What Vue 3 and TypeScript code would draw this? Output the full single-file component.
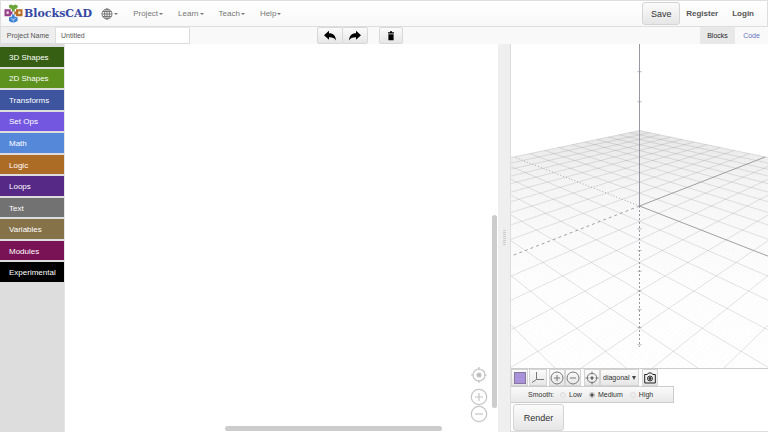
<script setup lang="ts">
import { ref } from 'vue'

interface Category { name: string; color: string }

const categories: Category[] = [
  { name: '3D Shapes', color: '#375f14' },
  { name: '2D Shapes', color: '#5c921d' },
  { name: 'Transforms', color: '#3d559f' },
  { name: 'Set Ops', color: '#7457e0' },
  { name: 'Math', color: '#5688da' },
  { name: 'Logic', color: '#ad6c26' },
  { name: 'Loops', color: '#552985' },
  { name: 'Text', color: '#727272' },
  { name: 'Variables', color: '#857249' },
  { name: 'Modules', color: '#7a1356' },
  { name: 'Experimental', color: '#000000' },
]
const menus: string[] = ['Project', 'Learn', 'Teach', 'Help']
const qualities: string[] = ['Low', 'Medium', 'High']
const quality = ref('Medium')
const projectName = ref('Untitled')
const view = ref('diagonal')

// Perspective projection of the build plate: x and y in cells, z in cells above it.
const originX = 639.5
const originY = 206
function project(x: number, y: number): string {
  const across = (x - y) / 2
  const depth = (x + y) / 2
  const w = 1 + 0.0855 * depth
  return `${(originX + (35.9 * across) / w).toFixed(2)} ${(originY - (14 * depth) / w).toFixed(2)}`
}
function heightAt(z: number): number {
  return originY - (23.4 * z) / (1 - 0.0257 * z)
}
function gridPath(step: number, major: boolean): string {
  let d = ''
  for (let n = -10 * step; n <= 10 * step; n++) {
    if (n === 0 || (!major && n % step === 0)) continue
    const v = n / step
    d += `M${project(v, -10)}L${project(v, 10)}M${project(-10, v)}L${project(10, v)}`
  }
  return d
}
const minorGrid = gridPath(10, false)
const majorGrid = gridPath(1, true)
const solidAxes = `M${project(0, 0)}L${project(10, 0)}M${project(0, 0)}L${project(0, -10)}`
const dashedFar = `M${project(0, 0)}L${project(0, 10)}`
const dashedNear = `M${project(0, 0)}L${project(-10, 0)}`
const plate = `M${project(10, 10)}L${project(10, -10)}L${project(-10, -10)}L${project(-10, 10)}Z`
const ticks = [5, 4, -1, -2, -3, -4, -5, -6, -7].map((z) => `M637.5 ${heightAt(z).toFixed(1)}h4`).join('')
</script>

<template>
  <div class="app">
    <header class="navbar">
      <a class="brand" href="#">
        <svg class="logo" viewBox="0 0 19 19" aria-hidden="true">
          <path d="M4.800 1.500l2.200-1 2 1 2.500-1 2.500 1.500-1 2.300-2.300.9v2.300H8V5.200L5.500 4z" fill="#69a33a" />
          <path d="M.5 5.200h6.300v2.300h1.700v3H6.800v1.800H.5z" fill="#963f86" />
          <path d="M2.500 7.300h2.300v2.700H2.500z" fill="#ecd3e6" />
          <path d="M12 5.200h6.500v7.100H12v-1.800h-1.700v-3H12z" fill="#b86f25" />
          <path d="M14.200 7.300h2.300v2.700h-2.300z" fill="#fbe7c8" />
          <path d="M8 10.500h2.600v2l3 1v3.500l-3.300 1.500H8L5 17v-3.500l3-1z" fill="#3f83d5" />
          <path d="M7 14.500l2.300 1 2.300-1M9.300 15.500v2" fill="none" stroke="#d5e7fc" stroke-width=".8" />
        </svg>
        <span>BlocksCAD</span>
      </a>
      <nav class="menus">
        <button class="menu globe" aria-label="Language">
          <svg viewBox="0 0 12 12" aria-hidden="true">
            <circle cx="6" cy="6" r="5" /><ellipse cx="6" cy="6" rx="2.400" ry="5" />
            <path d="M6 1v10M1 6h10M1.800 3.500h8.400M1.800 8.500h8.400" />
          </svg>
          <i class="caret"></i>
        </button>
        <button v-for="m in menus" :key="m" class="menu">{{ m }}<i class="caret"></i></button>
      </nav>
      <div class="account">
        <button class="raised save">Save</button>
        <a href="#">Register</a>
        <a href="#">Login</a>
      </div>
    </header>

    <div class="toolbar">
      <label class="name-label" for="project-name">Project Name</label>
      <input id="project-name" v-model="projectName" class="name-input" type="text" />
      <div class="edit-tools">
        <div class="pair">
          <button class="raised tool" aria-label="Undo">
            <svg viewBox="0 0 14 12" aria-hidden="true"><path d="M1 5.200L6 .8v2.500c4.300 0 6.600 2.500 7 7.200C11.500 8 9.500 7.200 6 7.300v2.500z" /></svg>
          </button>
          <button class="raised tool" aria-label="Redo">
            <svg viewBox="0 0 14 12" aria-hidden="true"><path d="M13 5.200L8 .8v2.500C3.700 3.300 1.400 5.800 1 10.500 2.500 8 4.500 7.200 8 7.300v2.500z" /></svg>
          </button>
        </div>
        <button class="raised tool trash" aria-label="Delete">
          <svg viewBox="0 0 14 12" aria-hidden="true"><path d="M4 2.200h2v-1h2v1h2v1.300H4zM4.400 4.200h5.200v6H4.400z" /></svg>
        </button>
      </div>
      <div class="tabs">
        <button class="tab active">Blocks</button>
        <button class="tab code">Code</button>
      </div>
    </div>

    <main class="workspace">
      <section class="editor">
        <div class="toolbox">
          <ul class="categories">
            <li v-for="c in categories" :key="c.name">
              <button class="category" :style="{ backgroundColor: c.color }">{{ c.name }}</button>
            </li>
          </ul>
        </div>
        <div class="blocks">
          <div class="zoomers">
            <button aria-label="Center blocks">
              <svg viewBox="0 0 18 18" aria-hidden="true"><circle cx="9" cy="9" r="6" /><circle cx="9" cy="9" r="2" class="dot" /><path d="M9 1v3M9 14v3M1 9h3M14 9h3" /></svg>
            </button>
            <button class="in" aria-label="Zoom in">
              <svg viewBox="0 0 18 18" aria-hidden="true"><circle cx="9" cy="9" r="7.700" /><path d="M5 9h8M9 5v8" /></svg>
            </button>
            <button aria-label="Zoom out">
              <svg viewBox="0 0 18 18" aria-hidden="true"><circle cx="9" cy="9" r="7.700" /><path d="M5 9h8" /></svg>
            </button>
          </div>
          <div class="scroll-v"></div>
          <div class="scroll-h"></div>
        </div>
      </section>
      <div class="splitter"><i></i></div>
      <section class="viewer">
        <svg class="scene" viewBox="511 44 257 324" preserveAspectRatio="xMidYMid slice" aria-hidden="true">
          <defs>
            <linearGradient id="haze" gradientUnits="userSpaceOnUse" x1="0" y1="130" x2="0" y2="290">
              <stop offset="0" stop-color="#f3f3f3" />
              <stop offset=".35" stop-color="#fafafa" />
              <stop offset="1" stop-color="#ffffff" />
            </linearGradient>
          </defs>
          <path :d="plate" fill="url(#haze)" />
          <path :d="minorGrid" class="minor" />
          <path :d="majorGrid" class="major" />
          <path :d="solidAxes" class="axis" />
          <path :d="dashedFar" class="axis far" />
          <path :d="dashedNear" class="axis near" />
          <path d="M639.500 44V206" class="z-axis" />
          <path d="M639.500 206V347" class="z-axis below" />
          <path :d="ticks" class="ticks" />
        </svg>
        <div class="view-tools">
          <button class="raised swatch" aria-label="Color"><i></i></button>
          <button class="raised icon axes" aria-label="Toggle axes">
            <svg viewBox="0 0 16 16" aria-hidden="true"><path d="M6.500 2v7.500H14M6.500 9.500L2 12.500" /></svg>
          </button>
          <button class="raised icon" aria-label="Zoom in">
            <svg viewBox="0 0 16 16" aria-hidden="true"><circle cx="8" cy="8" r="6" /><path d="M5 8h6M8 5v6" /></svg>
          </button>
          <button class="raised icon" aria-label="Zoom out">
            <svg viewBox="0 0 16 16" aria-hidden="true"><circle cx="8" cy="8" r="6" /><path d="M5 8h6" /></svg>
          </button>
          <button class="raised icon reset" aria-label="Reset view">
            <svg viewBox="0 0 16 16" aria-hidden="true"><circle cx="8" cy="8" r="4.700" /><circle cx="8" cy="8" r="1.200" class="dot" /><path d="M8 1.500v3M8 11.500v3M1.500 8h3M11.500 8h3" /></svg>
          </button>
          <div class="raised picker">
            <select v-model="view" aria-label="View direction">
              <option>diagonal</option>
              <option>front</option>
              <option>top</option>
            </select>
            <i></i>
          </div>
          <button class="raised icon camera" aria-label="Take picture">
            <svg viewBox="0 0 16 16" aria-hidden="true"><path d="M2.700 4.500h2.600L6.500 3h3l1.200 1.500h2.600v8.500H2.700z" /><circle cx="8" cy="8.500" r="2.500" /><circle cx="8" cy="8.500" r="1" class="dot" /></svg>
          </button>
        </div>
        <div class="quality" role="radiogroup" aria-labelledby="smooth-label">
          <span id="smooth-label" class="smooth">Smooth:</span>
          <label v-for="q in qualities" :key="q">
            <input v-model="quality" type="radio" name="quality" :value="q" />{{ q }}
          </label>
        </div>
        <div class="render-row"><button class="raised render">Render</button></div>
      </section>
    </main>
  </div>
</template>

<style>
body { margin: 0; background: #fff; }
</style>

<style scoped>
* { box-sizing: border-box; }
.app { display: flex; flex-direction: column; height: 100vh; overflow: hidden; font: 8px/12px "Liberation Sans", Arial, sans-serif; color: #333; }
button { margin: 0; padding: 0; border: 0; background: none; font: inherit; color: inherit; display: flex; align-items: center; justify-content: center; }
a { color: inherit; text-decoration: none; }
svg { display: block; flex: none; }
.raised { border: 1px solid #d4d4d4; background: linear-gradient(#fbfbfb, #e6e6e6); }

.navbar { display: flex; align-items: center; height: 27px; flex: none; border: 1px solid #dedede; background: linear-gradient(#fff, #f8f8f8); }
.brand { display: flex; align-items: center; gap: 1px; margin-left: 3px; color: #3648a4; font: bold 11px/16px "DejaVu Serif", serif; }
.logo { width: 19px; height: 19px; }
.menus { display: flex; align-items: center; gap: 15px; margin-left: 9px; color: #777; }
.menu { gap: 1px; }
.globe svg { width: 12px; height: 12px; fill: none; stroke: #777; stroke-width: 1; }
.caret { border: 2px solid transparent; border-top-color: #777; border-bottom: 0; }
.account { display: flex; align-items: center; gap: 14px; margin-left: auto; margin-right: 13px; font-weight: bold; color: #555; }
.save { width: 38px; height: 23px; margin-right: -8px; border-radius: 3px; font-size: 9px; font-weight: normal; color: #333; }

.toolbar { display: flex; height: 17px; flex: none; background: #f9f9f9; font-size: 7px; color: #555; }
.name-label { width: 56px; border: 1px solid #ddd; border-top: 0; background: #eee; text-align: center; line-height: 17px; }
.name-input { width: 134px; border: 1px solid #ddd; border-top-color: #e8e8e8; border-left: 0; padding: 0 5px; background: #fff; font: inherit; color: #555; outline: 0; }
.edit-tools { display: flex; gap: 11px; margin-left: 127px; }
.pair { display: flex; }
.tool { width: 26px; height: 17px; border-radius: 2px; border-color: #d8d8d8; }
.pair .tool + .tool { margin-left: -1px; }
.tool svg { width: 14px; height: 12px; fill: #000; }
.trash { width: 24px; }
.tabs { display: flex; margin-left: auto; }
.tab { width: 35px; color: #6672c4; }
.tab.code { width: 33px; }
.tab.active { background: #e8e8e8; color: #222; }

.workspace { display: grid; grid-template-columns: 498fr 12px 258fr; flex: 1; min-height: 0; }
.editor { display: flex; min-width: 0; }
.toolbox { width: 65px; flex: none; padding-top: 3px; background: #ddd; border-right: 1px solid #e6e6e6; }
.categories { display: flex; flex-direction: column; gap: 2px; height: 235px; margin: 0; padding: 0; list-style: none; }
.categories li { display: flex; flex: 1; min-height: 0; }
.category { flex: 1; justify-content: flex-start; padding: 2px 0 0 9px; color: #fff; }
.blocks { position: relative; flex: 1; }
.zoomers { position: absolute; right: 10px; bottom: 10px; display: flex; flex-direction: column; }
.zoomers .in { margin-top: 5px; }
.zoomers button { width: 18px; height: 18px; margin-bottom: -1px; }
.zoomers svg { width: 18px; height: 18px; fill: none; stroke: #c4c4c4; stroke-width: 1.2; }
.zoomers .dot { fill: #bbb; }
.scroll-v { position: absolute; right: 1px; top: 44%; bottom: 24px; width: 5px; border-radius: 3px; background: #ccc; }
.scroll-h { position: absolute; left: 37%; right: 56px; bottom: 1px; height: 5px; border-radius: 3px; background: #ccc; }
.splitter { display: flex; align-items: center; justify-content: center; background: #efefef; }
.splitter i { width: 3px; height: 16px; background: repeating-linear-gradient(#ccc 0 1px, #eee 1px 2px); }

.viewer { display: flex; flex-direction: column; min-width: 0; border-left: 1px solid #ddd; }
.scene { flex: 1; min-height: 0; width: 100%; fill: none; }
.minor { stroke: #777; stroke-opacity: .05; stroke-width: .5; }
.major { stroke: #777; stroke-opacity: .38; stroke-width: .6; }
.axis { stroke: #888; stroke-width: .8; }
.far { stroke-dasharray: 1 2; }
.near { stroke-dasharray: 3 3; }
.z-axis { stroke: #8c8c98; stroke-width: .9; }
.below { stroke-dasharray: 2 2; }
.ticks { stroke: #999; stroke-width: .7; }
.view-tools { display: flex; height: 18px; flex: none; border-top: 1px solid #ccc; }
.icon { width: 16px; }
.icon svg { width: 16px; height: 16px; fill: none; stroke: #777; stroke-width: 1; }
.icon .dot { fill: #444; }
.view-tools .swatch { width: 17px; }
.swatch i { width: 12px; height: 12px; border: 1px solid #88769f; background: #a892dc; }
.axes { width: 18px; margin: 0 2px 0 1px; }
.reset { margin-left: 3px; }
.picker { display: flex; align-items: center; width: 39px; }
.picker select { appearance: none; width: 31px; padding: 0 0 0 2px; border: 0; background: none; font: 7px/12px "Liberation Sans", Arial, sans-serif; color: #333; outline: 0; }
.picker i { border: 2px solid transparent; border-top: 4px solid #444; border-bottom: 0; }
.camera { margin-left: 3px; }
.camera svg { stroke: #222; }
.quality { display: flex; align-items: center; align-self: flex-start; width: 163px; height: 17px; flex: none; padding: 1px 0 0 17px; border: 1px solid #ccc; border-left: 0; background: linear-gradient(#fafafa, #e8e8e8); font-size: 7px; }
.smooth { margin-right: 6px; }
.quality label { display: flex; align-items: center; gap: 3px; margin-right: 7px; }
.quality input { appearance: none; width: 6px; height: 6px; margin: 0; border: 1px solid #ddd; border-radius: 50%; background: #eee; }
.quality input:checked { border-color: #bbb; background: radial-gradient(#444 0 1px, #ddd 2px); }
.render-row { display: flex; height: 29px; flex: none; padding: 1px 0 0 2px; border-bottom: 1px solid #ddd; }
.render { width: 51px; height: 27px; border-radius: 3px; font-size: 9px; }
</style>
